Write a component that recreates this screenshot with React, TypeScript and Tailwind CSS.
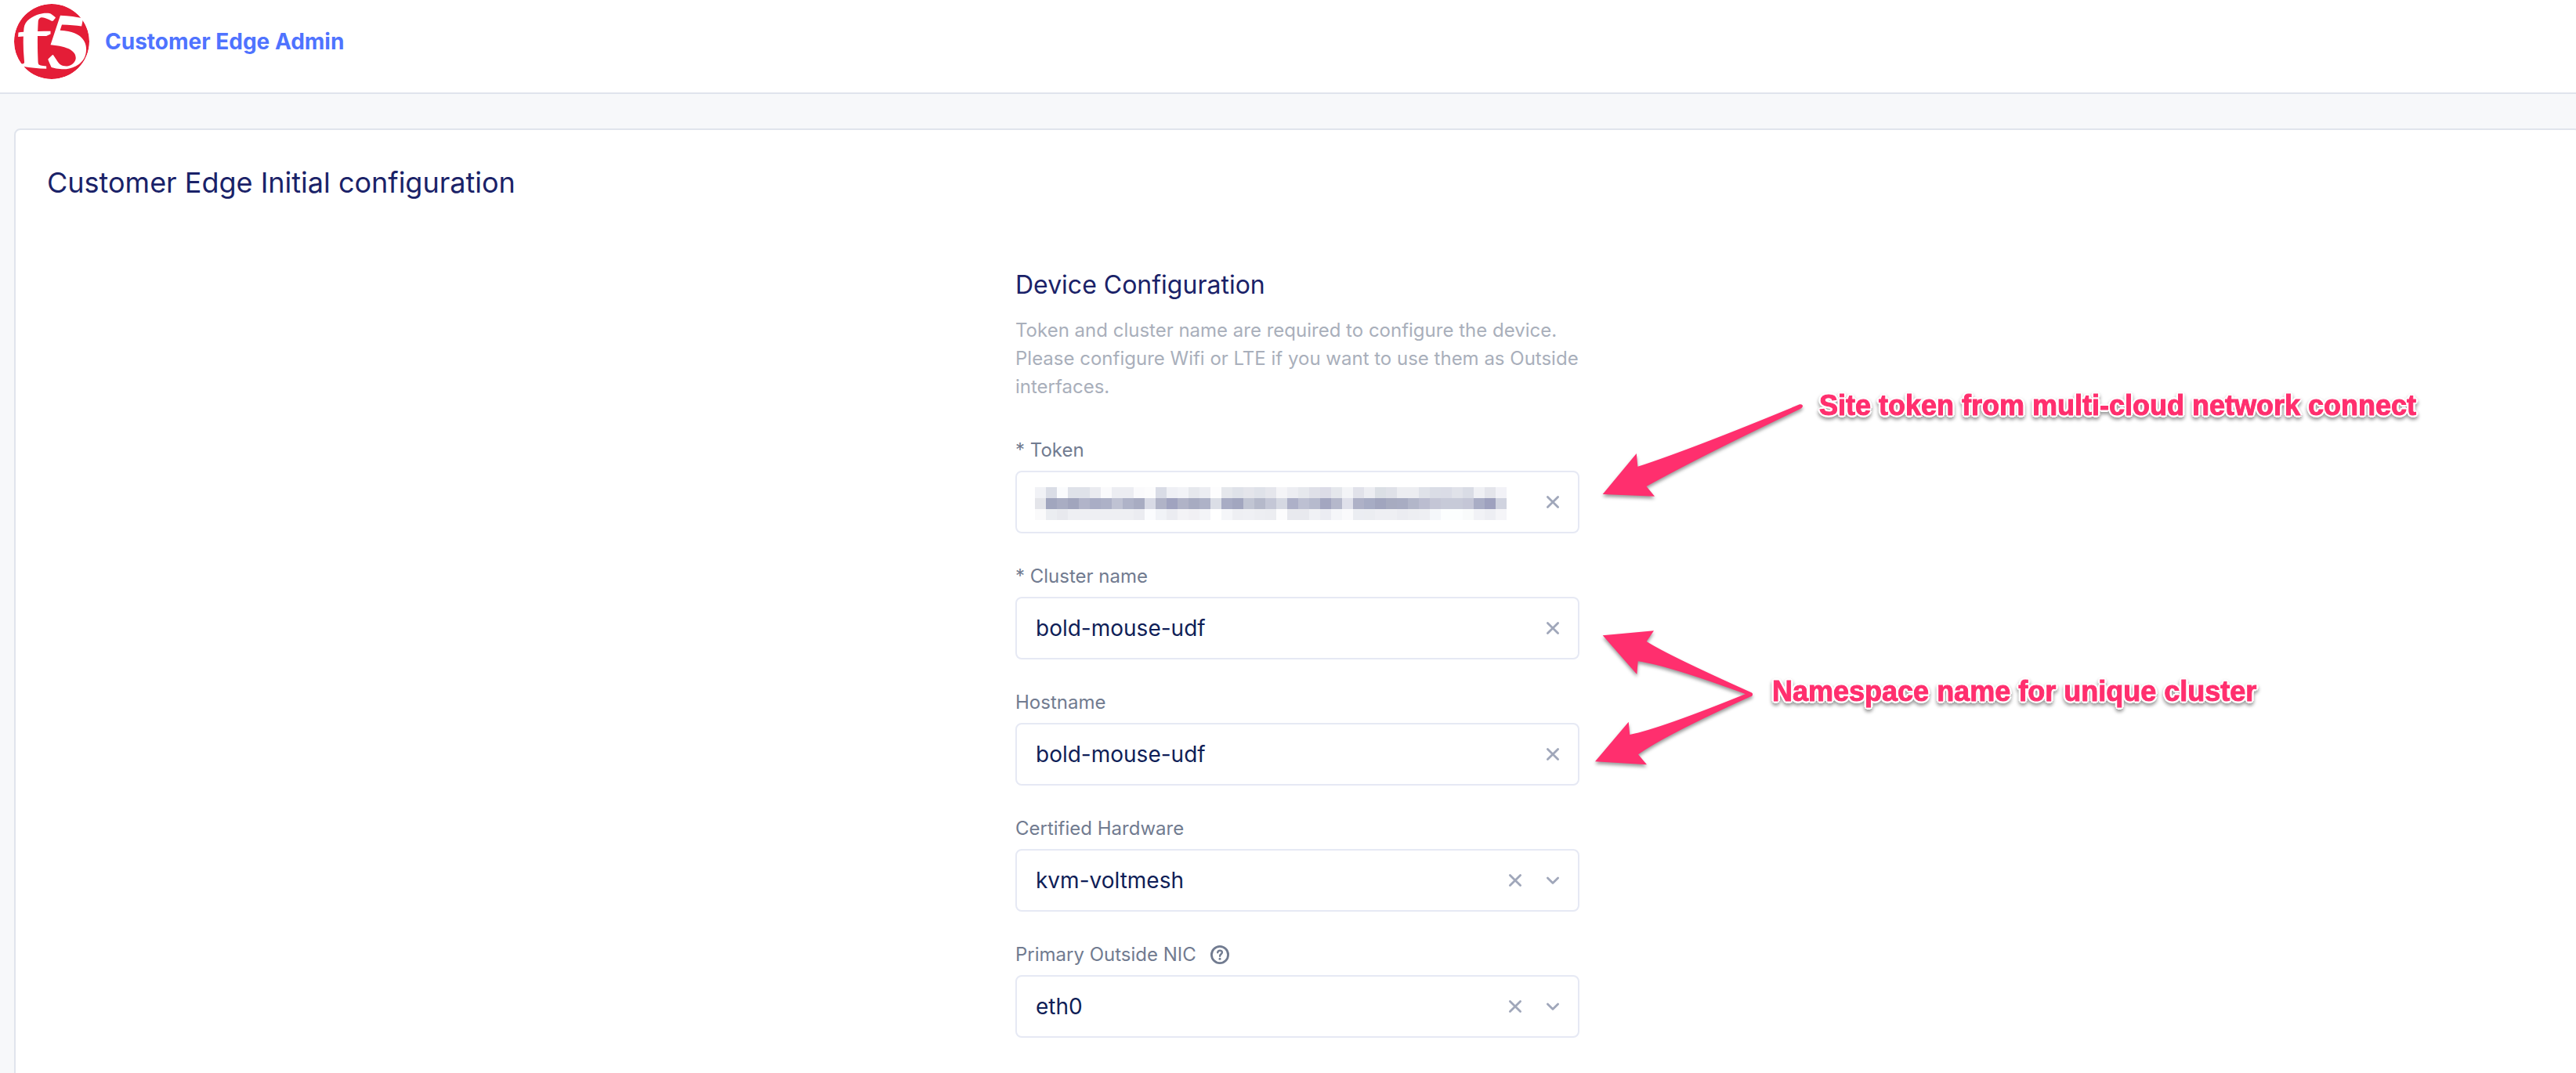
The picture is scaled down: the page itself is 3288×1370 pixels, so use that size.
import React from "react";
import { SiF5 } from "react-icons/si";

const TOP_ROW =
  "f1f2f6 dadde6 fafbfd dfe2e9 dfe2e9 eaebf0 fafafc ecedf2 ecedf2 fafafc fcfcfd d9dce6 eff0f5 f2f3f7 e6e8ed ecedf2 fdfdfe e5e7ec dfe2e9 e4e5eb dfe2e9 e5e6ec f4f4f7 ecedf2 e6e8ed dfe0e8 dcdce7 e5e7ec f3f4f7 e1e2ea ecedf2 dbdfe5 dfe1e8 ecedf1 ecedf1 dfe2e9 dadde6 dadce6 e0e2e9 d9dce5 eff0f4 e4e5eb f2f2f7".split(
    " ",
  );
const MIDDLE_ROW =
  "e4e5ea a1a6be a9adc3 a1a5bd b1b4c9 a9adc5 adb1c7 bfc2d3 afb3c8 a8acc2 d8dae5 b0b3c7 a0a3bf b0b3c7 a7abc1 aeb2c7 dbdee6 a8acc4 a2a6bf c1c5d3 b5b9ca c4c7d6 d5d8e2 adb0c8 bdc0d2 b6bacd a3a6c0 b5b8cb dfe0ea aeb1c7 a7acc4 a1a5be a7abc0 a8acc2 b2b6c9 bbbdd0 c4c6d6 c7cad8 c7cad8 c4c6d6 a9adc5 9ea1be d0d3df".split(
    " ",
  );
const BOTTOM_ROW =
  "fafafb ebedf1 e8e9ee eeeff3 eeeff3 eeeff3 eeeff3 eeeff3 eeeff3 ebecf1 fbfcfe f1f3f7 ebecf1 f3f3f6 f1f0f4 f3f4f7 ffffff f5f6f9 eeeff3 eff0f4 edeef2 ecedf1 fcfcfd e8e9ee e8e9ee f0f1f5 ebecf2 f5f6f9 fafafc ebedf2 ebedf1 eeeff3 eeeff3 ebecf1 edeef2 eeeff3 f5f7fa fcfefe fcfefe f9fbfb f1f2f6 edeef3 f5f5f8".split(
    " ",
  );
const MOSAIC = [TOP_ROW, MIDDLE_ROW, BOTTOM_ROW];

function Redaction() {
  return (
    <svg
      className="pointer-events-none absolute top-[21px] left-[25px] h-[42px] w-[602px]"
      viewBox="0 0 43 3"
      preserveAspectRatio="none"
      shapeRendering="crispEdges"
      aria-hidden="true"
    >
      {MOSAIC.map((row, y) =>
        row.map((c, x) => <rect key={`${x}-${y}`} x={x} y={y} width="1" height="1" fill={`#${c}`} />),
      )}
    </svg>
  );
}

function ClearIcon() {
  return (
    <svg className="size-5" viewBox="0 0 20 20" fill="none" stroke="#a0a7ba" strokeWidth="2.8" strokeLinecap="round">
      <path d="M3.4 3.4 16.6 16.6M16.6 3.4 3.4 16.6" />
    </svg>
  );
}

function ChevronIcon() {
  return (
    <svg
      className="size-5"
      viewBox="0 0 20 20"
      fill="none"
      stroke="#a0a7ba"
      strokeWidth="2.8"
      strokeLinecap="round"
      strokeLinejoin="round"
    >
      <path d="M3.4 7 10 13.400 16.6 7" />
    </svg>
  );
}

function HelpIcon() {
  return (
    <svg className="size-6" viewBox="0 0 24 24" fill="none" stroke="#717b90" strokeLinecap="round">
      <circle cx="12" cy="12" r="10.6" strokeWidth="2.800" />
      <path d="M9.2 9.2C9.4 7.4 10.5 6.6 12 6.6c1.7 0 2.9 1 2.9 2.5 0 2.2-2.8 2.2-2.8 4.6" strokeWidth="2.4" />
      <circle cx="12" cy="17.2" r="1.5" fill="#717b90" stroke="none" />
    </svg>
  );
}

type FieldProps = {
  id: string;
  label: string;
  value: string;
  kind?: "text" | "select";
  redacted?: boolean;
  help?: boolean;
};

function Field({ id, label, value, kind = "text", redacted = false, help = false }: FieldProps) {
  const control =
    "h-20 w-full appearance-none rounded-lg border-2 border-[#e6e9f4] bg-white px-6 text-[28px] text-[#0f1e57]";
  return (
    <div>
      <div className="flex items-center gap-[18px]">
        <label htmlFor={id} className="text-2xl leading-9 text-[#717b90]">
          {label}
        </label>
        {help && (
          <button type="button" aria-label={`About ${label}`}>
            <HelpIcon />
          </button>
        )}
      </div>
      <div className="relative mt-2">
        {kind === "select" ? (
          <select id={id} defaultValue={value} className={control}>
            <option>{value}</option>
          </select>
        ) : (
          <input id={id} type="text" defaultValue={value} className={control} />
        )}
        {redacted && <Redaction />}
        <div className="absolute inset-y-0 right-6 flex items-center gap-7">
          <button type="button" aria-label={`Clear ${label}`}>
            <ClearIcon />
          </button>
          {kind === "select" && (
            <span className="pointer-events-none">
              <ChevronIcon />
            </span>
          )}
        </div>
      </div>
    </div>
  );
}

const NOTE =
  "absolute whitespace-nowrap font-['Liberation_Sans',Arial,sans-serif] text-4xl font-bold text-[#ff2f6e] [-webkit-text-stroke:1px_#ff2f6e] [text-shadow:3px_0_white,-3px_0_white,0_3px_white,0_-3px_white,2px_2px_white,-2px_2px_white,2px_-2px_white,-2px_-2px_white] [filter:drop-shadow(0_3px_2px_rgba(0,0,0,0.4))]";

function Annotations() {
  return (
    <>
      <svg
        className="pointer-events-none absolute top-[156px] left-[730px] h-[500px] w-[300px] [filter:drop-shadow(0_3px_2px_rgba(0,0,0,0.4))]"
        viewBox="2026 500 300 500"
        fill="#ff2f6e"
        aria-hidden="true"
      >
        <path d="M2045.7 631 2088.8 579 2090.4 595.7Q2160 573 2297 516.3Q2301 515.5 2301 519Q2300 521 2297 522.5Q2170 583 2101.5 621L2112 633.7Z" />
        <path d="M2045.7 811.3 2111 805.3 2101.7 819Q2128 836 2235 884Q2238 886.5 2236 889Q2233 890 2229.3 886.7Q2130 850 2090.7 844.3L2089.3 861Z" />
        <path d="M2036 972.3 2078.7 921.7 2080.3 938Q2120 930 2233 884Q2237.5 884 2237 887Q2236 889 2233 890Q2125 939 2091 963.3L2102 976.3Z" />
      </svg>
      <p className={`${NOTE} top-[154px] left-[1026px]`}>Site token from multi-cloud network connect</p>
      <p className={`${NOTE} top-[519px] left-[966px]`}>Namespace name for unique cluster</p>
    </>
  );
}

export default function App() {
  return (
    <div className="min-h-screen overflow-hidden bg-[#f7f8fa] font-['Inter',sans-serif]">
      <header className="flex items-center gap-5 border-b-2 border-[#e0e4ec] bg-white pt-[5px] pb-[17px] pl-[18px]">
        <SiF5 className="size-24 rounded-full text-[#e41d37]" aria-label="F5" />
        <a href="#" className="text-[28px] font-bold text-[#4f73ff]">
          Customer Edge Admin
        </a>
      </header>
      <main className="mt-11 -mr-1.5 ml-[18px] rounded-lg border-2 border-[#e0e4ec] bg-white pt-[43px] pb-20">
        <h1 className="pl-10 text-4xl leading-[48px] text-[#1a2268]">Customer Edge Initial configuration</h1>
        <form className="relative mx-auto mt-[87px] w-[720px]">
          <h2 className="text-[32px] leading-10 text-[#1a2268]">Device Configuration</h2>
          <p className="mt-5 mb-[45px] text-2xl leading-9 text-[#a9afbb]">
            Token and cluster name are required to configure the device. Please configure Wifi or LTE if you want to use
            them as Outside interfaces.
          </p>
          <div className="flex flex-col gap-[37px]">
            <Field id="token" label="* Token" value="" redacted />
            <Field id="cluster" label="* Cluster name" value="bold-mouse-udf" />
            <Field id="hostname" label="Hostname" value="bold-mouse-udf" />
            <Field id="hardware" label="Certified Hardware" value="kvm-voltmesh" kind="select" />
            <Field id="nic" label="Primary Outside NIC" value="eth0" kind="select" help />
          </div>
          <Annotations />
        </form>
      </main>
    </div>
  );
}
